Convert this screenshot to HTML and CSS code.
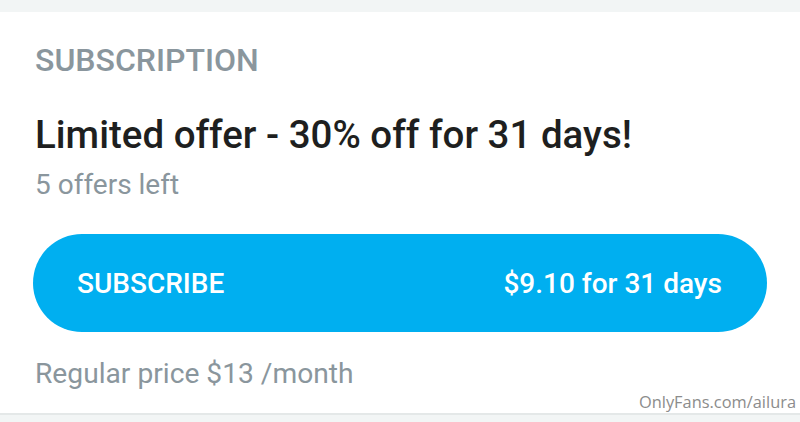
FILE: index.html
```html
<!DOCTYPE html>
<html>
<head>
  <meta charset="utf-8">
  <title>Subscription</title>
  <link rel="stylesheet" href="styles.css">
</head>
<body>
  <div class="top-gap"></div>
  <div class="card">
    <h2 class="card-title">SUBSCRIPTION</h2>
    <div class="offer">
      <div class="offer-title">Limited offer - 30% off for 31 days!</div>
      <div class="offer-left">5 offers left</div>
    </div>
    <button class="sub-btn">
      <span class="sub-label">SUBSCRIBE</span>
      <span class="sub-price">$9.10 for 31 days</span>
    </button>
    <div class="regular">Regular price $13 /month</div>
  </div>
  <div class="watermark">OnlyFans.com/ailura</div>
</body>
</html>
```

FILE: styles.css
```css
body {
  margin: 0;
  padding: 0;
  font-family: Roboto, "Liberation Sans", sans-serif;
  background-color: #f2f5f5;
  width: 800px;
  height: 422px;
  overflow: hidden;
  position: relative;
}
.top-gap {
  height: 12px;
}
.card {
  box-sizing: border-box;
  background-color: #fff;
  padding: 32px 33px 0 33px;
  height: 403px;
  border-bottom: 2px solid #e4e8e8;
}
.card-title {
  margin: 0;
  font-size: 32px;
  font-weight: 500;
  color: #8a969d;
  line-height: 32px;
  padding-left: 2px;
}
.offer {
  margin-top: 40px;
  padding-left: 2px;
}
.offer-title {
  font-size: 38.5px;
  font-weight: 500;
  color: #1e1f20;
  line-height: 38px;
}
.offer-left {
  font-size: 28px;
  color: #8a969d;
  line-height: 28px;
  margin-top: 17px;
}
.sub-btn {
  margin-top: 35px;
  width: 100%;
  height: 98px;
  border: none;
  border-radius: 49px;
  background-color: #00aff0;
  color: #fff;
  display: flex;
  justify-content: space-between;
  align-items: center;
  padding: 0 45px 0 44px;
  font-family: inherit;
  font-size: 28px;
  font-weight: 500;
  cursor: pointer;
}
.regular {
  margin-top: 28px;
  padding-left: 2px;
  font-size: 28.2px;
  color: #8a969d;
  line-height: 28px;
}
.watermark {
  position: absolute;
  right: 4px;
  bottom: 9px;
  font-family: "Open Sans", sans-serif;
  font-size: 16.4px;
  color: #8c8c8c;
}
```
